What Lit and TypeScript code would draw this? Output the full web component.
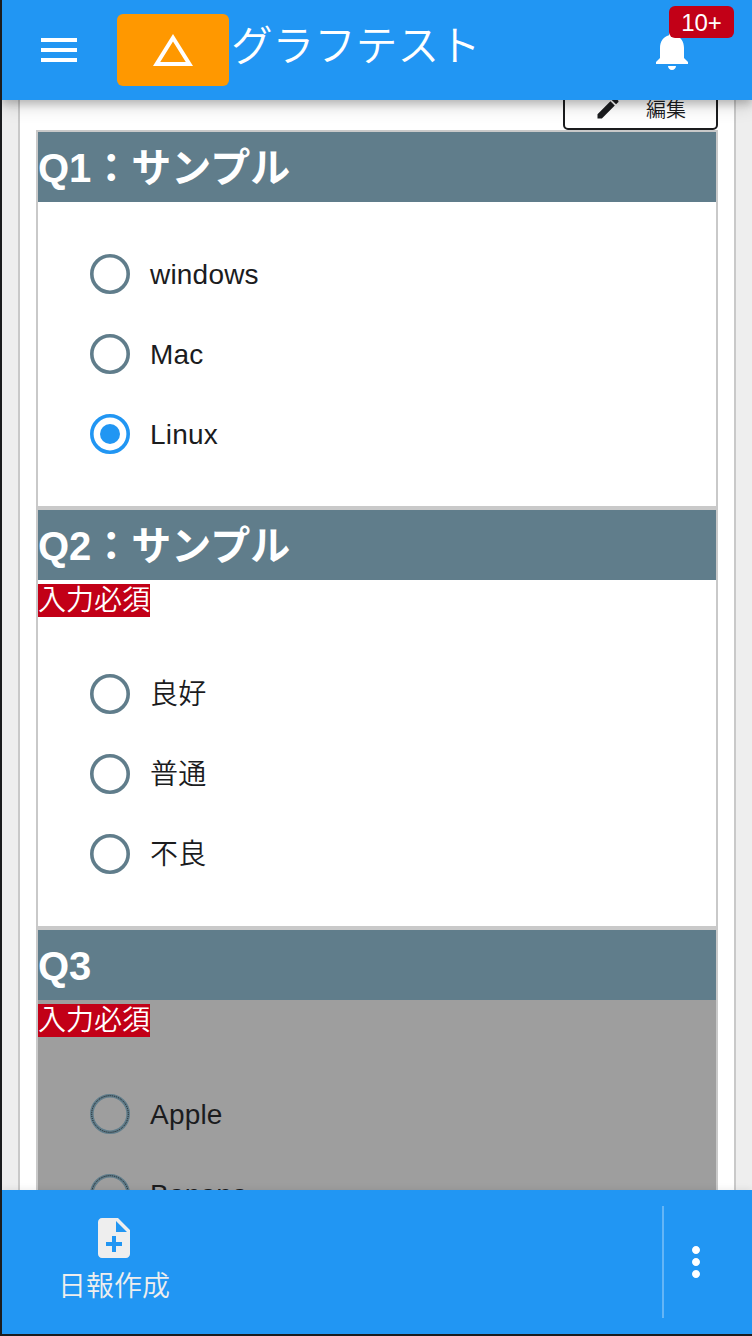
import { LitElement, html, css, svg, nothing } from "lit";
import { customElement, property } from "lit/decorators.js";

const ICONS: Record<string, string> = {
  menu: "M3 18h18v-2H3v2zm0-5h18v-2H3v2zm0-7v2h18V6H3z",
  triangle: "M12 7.77L18.39 18H5.61L12 7.77M12 4L2 20h20L12 4z",
  bell: "M12 22c1.1 0 2-.9 2-2h-4c0 1.1.89 2 2 2zm6-6v-5c0-3.07-1.64-5.64-4.5-6.32V4c0-.83-.67-1.5-1.5-1.5s-1.5.67-1.5 1.5v.68C7.63 5.36 6 7.92 6 11v5l-2 2v1h16v-1l-2-2z",
  edit: "M3 17.25V21h3.75L17.81 9.94l-3.75-3.75L3 17.25zM20.71 7.04c.39-.39.39-1.02 0-1.41l-2.34-2.34c-.39-.39-1.02-.39-1.41 0l-1.83 1.83 3.75 3.75 1.83-1.83z",
  noteAdd: "M14 2H6c-1.1 0-1.99.9-1.99 2L4 20c0 1.1.89 2 1.99 2H18c1.1 0 2-.9 2-2V8l-6-6zm2 14h-3v3h-2v-3H8v-2h3v-3h2v3h3v2zm-3-7V3.5L18.5 9H13z",
  more: "M12 8c1.1 0 2-.9 2-2s-.9-2-2-2-2 .9-2 2 .9 2 2 2zm0 2c-1.1 0-2 .9-2 2s.9 2 2 2 2-.9 2-2-.9-2-2-2zm0 6c-1.1 0-2 .9-2 2s.9 2 2 2 2-.9 2-2-.9-2-2-2z",
};

@customElement("md-icon")
class MdIcon extends LitElement {
  @property() name = "";
  static styles = css`
    :host { display: block; width: 48px; height: 48px; flex: none; }
    svg { display: block; width: 100%; height: 100%; fill: currentColor; }
  `;
  render() {
    return html`<svg viewBox="0 0 24 24">${svg`<path d=${ICONS[this.name]}></path>`}</svg>`;
  }
}

@customElement("radio-option")
class RadioOption extends LitElement {
  @property() label = "";
  @property({ type: Boolean }) checked = false;
  @property({ type: Boolean }) disabled = false;
  static styles = css`
    :host { display: flex; align-items: center; height: 80px; gap: 20px; color: #1b1c1e; }
    svg { display: block; width: 40px; height: 40px; fill: none; stroke: #607d8b; stroke-width: 3.6; flex: none; }
    .on { stroke: #2196f3; }
    .dot { fill: #2196f3; stroke: none; }
    .dots { stroke: #1b1c1e; stroke-width: 1; stroke-dasharray: 1 1; }
    .label { padding-top: 2px; font-size: 28px; line-height: 40px; letter-spacing: .2px; font-weight: 350; white-space: nowrap; }
  `;
  render() {
    return html`
      <svg class=${this.checked ? "on" : ""} viewBox="0 0 40 40">
        <circle cx="20" cy="20" r="18.2"></circle>
        ${this.checked ? svg`<circle class="dot" cx="20" cy="20" r="10"></circle>` : nothing}
        ${this.disabled ? svg`<circle class="dots" cx="20" cy="20" r="18.3"></circle>` : nothing}
      </svg>
      <span class="label">${this.label}</span>
    `;
  }
}

interface Question {
  title: string;
  required: boolean;
  disabled: boolean;
  options: string[];
  selected?: string;
}

const QUESTIONS: Question[] = [
  { title: "Q1：サンプル", required: false, disabled: false, options: ["windows", "Mac", "Linux"], selected: "Linux" },
  { title: "Q2：サンプル", required: true, disabled: false, options: ["良好", "普通", "不良"] },
  { title: "Q3", required: true, disabled: true, options: ["Apple", "Banana"] },
];

@customElement("question-card")
class QuestionCard extends LitElement {
  @property({ attribute: false }) question!: Question;
  static styles = css`
    :host { display: block; border: 2px solid #c9c9c9; background: #fff; }
    .title { margin: 0; height: 70px; line-height: 72px; font-size: 40px; font-weight: 700; color: #fff; background: #607d8b; white-space: nowrap; }
    .body { display: flex; flex-direction: column; }
    .disabled { background: #9e9e9e; }
    .required { align-self: flex-start; margin-top: 4px; height: 33px; line-height: 34px; font-size: 28px; font-weight: 350; color: #fff; background: #c20017; }
    .options { padding: 32px 52px; }
    .required + .options { padding-top: 37px; }
  `;
  render() {
    const q = this.question;
    return html`
      <h2 class="title">${q.title}</h2>
      <div class="body ${q.disabled ? "disabled" : ""}">
        ${q.required ? html`<span class="required">入力必須</span>` : nothing}
        <div class="options">
          ${q.options.map((o) => html`<radio-option .label=${o} ?checked=${o === q.selected} ?disabled=${q.disabled}></radio-option>`)}
        </div>
      </div>
    `;
  }
}

@customElement("app-root")
class AppRoot extends LitElement {
  static styles = css`
    :host {
      display: flex; flex-direction: column; box-sizing: border-box; height: 1336px; overflow: hidden;
      border-left: 2px solid #1b1c1e; border-bottom: 2px solid #1b1c1e; background: #eee;
      font-family: "Liberation Sans", "Noto Sans CJK JP", sans-serif;
    }
    .bar { display: flex; align-items: center; flex: none; height: 100px; color: #fff; background: #2196f3;
      z-index: 1; box-shadow: 0 4px 8px rgba(0,0,0,.2), 0 8px 16px rgba(0,0,0,.12); }
    .menu { margin-left: 33px; }
    .mark { display: flex; align-items: center; justify-content: center; width: 112px; height: 72px; margin-left: 34px; border-radius: 6px; background: #ff9800; }
    .name { flex: 1; margin: 0; padding: 0 0 7px 2px; font-size: 41.6px; line-height: 60px; font-weight: 350; white-space: nowrap; }
    .alerts { position: relative; margin-right: 56px; }
    .count { position: absolute; left: 21px; top: -20px; width: 65px; height: 32px; line-height: 33px; border-radius: 6px; text-align: center; font-size: 24px; background: #c20017; }
    .scroll { flex: 1; min-height: 0; overflow: hidden; padding: 0 16px; }
    .sheet { display: flex; flex-direction: column; margin-top: -14px; padding: 0 16px; background: #fff; border: solid #c9c9c9; border-width: 0 2px; }
    .edit { display: flex; align-items: center; align-self: flex-end; box-sizing: border-box; width: 155px; height: 44px; padding-left: 29px; gap: 24px;
      border: 2px solid #1b1c1e; border-radius: 5px; color: #1b1c1e; font-size: 20px; line-height: 24px; }
    .edit md-icon { width: 28px; height: 28px; }
    .edit span { padding-top: 3px; font-weight: 350; }
    .foot { display: flex; align-items: center; justify-content: space-between; flex: none; height: 144px; background: #2196f3; color: #fff; z-index: 1; box-shadow: 0 -2px 6px rgba(0,0,0,.06); }
    .create { display: flex; flex-direction: column; align-items: center; margin-left: 56px; color: #eee; font-size: 28px; line-height: 46px; font-weight: 350; }
    .create span { padding-top: 2px; }
    .more { display: flex; align-items: center; height: 112px; padding: 0 32px 0 8px; border-left: 2px solid #64b5f6; }
  `;
  render() {
    return html`
      <header class="bar">
        <md-icon class="menu" name="menu"></md-icon>
        <div class="mark"><md-icon name="triangle"></md-icon></div>
        <h1 class="name">グラフテスト</h1>
        <div class="alerts"><md-icon name="bell"></md-icon><span class="count">10+</span></div>
      </header>
      <main class="scroll">
        <div class="sheet">
          <div class="edit"><md-icon name="edit"></md-icon><span>編集</span></div>
          ${QUESTIONS.map((q) => html`<question-card .question=${q}></question-card>`)}
        </div>
      </main>
      <footer class="foot">
        <div class="create"><md-icon name="noteAdd"></md-icon><span>日報作成</span></div>
        <div class="more"><md-icon name="more"></md-icon></div>
      </footer>
    `;
  }
}
